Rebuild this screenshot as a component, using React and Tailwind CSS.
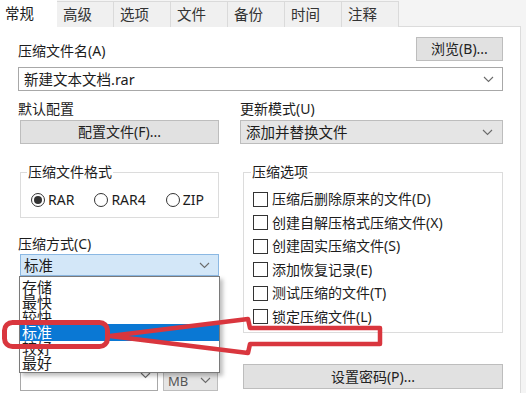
import React from "react";

const tabs = ["常规", "高级", "选项", "文件", "备份", "时间", "注释"];

const options = [
  "压缩后删除原来的文件(D)",
  "创建自解压格式压缩文件(X)",
  "创建固实压缩文件(S)",
  "添加恢复记录(E)",
  "测试压缩的文件(T)",
  "锁定压缩文件(L)",
];

const Chevron = ({ className = "" }) => (
  <svg width="11" height="7" viewBox="0 0 11 7" className={className}>
    <polyline points="1,1 5.5,5.5 10,1" fill="none" stroke="#6b6b6b" strokeWidth="1.1" />
  </svg>
);

const Radio = ({ checked, label }) => (
  <div className="flex items-center gap-[3px]">
    <span className="w-[14px] h-[14px] rounded-full border border-[#333] flex items-center justify-center">
      {checked && <span className="w-[8px] h-[8px] rounded-full bg-[#333]" />}
    </span>
    <span className="text-[14px] leading-[16px]">{label}</span>
  </div>
);

const App = () => {
  return (
    <div
      className="relative w-[526px] h-[393px] overflow-hidden bg-[#f4f4f4] text-[#1c1c1c]"
      style={{ fontFamily: '"Noto Sans", "Noto Sans CJK SC", sans-serif' }}
    >
      {/* Tabs */}
      <div className="flex h-[26px]">
        {tabs.map((t, i) => (
          <div
            key={t}
            className={
              i === 0
                ? "w-[57px] h-[27px] bg-white pl-[5px] pt-[4px] text-[14.5px] leading-[18px] relative z-10"
                : "w-[57px] h-[26px] mt-[1px] bg-[#f0f0f0] border-r border-t border-[#dadada] pl-[6px] pt-[3px] text-[14.5px] leading-[18px] text-[#333]"
            }
          >
            {t}
          </div>
        ))}
      </div>

      {/* Panel */}
      <div className="w-[521px] h-[367px] bg-white border-r border-t border-[#dcdcdc] pl-[18px] pr-[17px]">
        <div className="flex items-end justify-between pt-[10px]">
          <span className="text-[14px] leading-[18px] mb-[1px]">压缩文件名(A)</span>
          <button className="w-[87px] h-[24px] bg-[#e1e1e1] border border-[#bdbdbd] text-[14px] leading-[18px] text-[#222]">
            浏览(B)...
          </button>
        </div>
        <div className="mt-[6px] h-[24px] border border-[#a8a8a8] flex items-center justify-between pl-[5px] pr-[8px]">
          <span className="text-[14.5px] leading-[18px]">新建文本文档.rar</span>
          <Chevron />
        </div>

        <div className="flex gap-[21px] mt-[9px]">
          {/* Left column */}
          <div className="w-[201px] flex flex-col">
            <span className="text-[14px] leading-[18px]">默认配置</span>
            <button className="mt-[2px] ml-[2px] h-[24px] bg-[#e1e1e1] border border-[#bdbdbd] text-[14px] leading-[18px] text-[#222]">
              配置文件(F)...
            </button>
            <div className="relative mt-[28px] ml-[2px] h-[46px] border border-[#dcdcdc]">
              <span className="absolute left-[6px] -top-[10px] bg-white px-[1px] text-[14px] leading-[18px]">
                压缩文件格式
              </span>
              <div className="flex gap-[20px] pl-[10px] pt-[19px]">
                <Radio checked label="RAR" />
                <Radio label="RAR4" />
                <Radio label="ZIP" />
              </div>
            </div>
            <span className="mt-[17px] text-[14px] leading-[18px]">压缩方式(C)</span>
            <div className="mt-[1px] ml-[2px] h-[22px] bg-[#d3e7f8] border border-[#8bb8e3] flex items-center justify-between pl-[3px] pr-[8px]">
              <span className="text-[14.5px] leading-[18px]">标准</span>
              <Chevron />
            </div>
            <div className="flex gap-[5px] mt-[94px] ml-[2px]">
              <div className="w-[138px] h-[21px] border border-[#a8a8a8] flex items-start justify-end pr-[6px] pt-[1px]">
                <Chevron />
              </div>
              <div className="w-[55px] h-[21px] bg-[#e5e5e5] border border-[#bdbdbd] flex items-center justify-between pl-[4px] pr-[6px]">
                <span className="text-[13px] leading-[16px] text-[#555]">MB</span>
                <Chevron />
              </div>
            </div>
          </div>

          {/* Right column */}
          <div className="w-[263px] flex flex-col">
            <span className="text-[14px] leading-[18px]">更新模式(U)</span>
            <div className="mt-[2px] h-[24px] bg-[#e5e5e5] border border-[#bdbdbd] flex items-center justify-between pl-[5px] pr-[9px]">
              <span className="text-[14.5px] leading-[18px]">添加并替换文件</span>
              <Chevron />
            </div>
            <div className="relative mt-[28px] ml-[3px] h-[161px] border border-[#dcdcdc]">
              <span className="absolute left-[7px] -top-[10px] bg-white px-[1px] text-[14px] leading-[18px]">
                压缩选项
              </span>
              <div className="flex flex-col gap-[7.5px] pl-[9px] pt-[18px]">
                {options.map((o) => (
                  <div key={o} className="flex items-center gap-[4px] h-[16px]">
                    <span className="w-[15px] h-[15px] border border-[#333]" />
                    <span className="text-[14px] leading-[16px]">{o}</span>
                  </div>
                ))}
              </div>
            </div>
            <button className="mt-[31px] ml-[3px] h-[25px] bg-[#e1e1e1] border border-[#bdbdbd] text-[14px] leading-[18px] text-[#222]">
              设置密码(P)...
            </button>
          </div>
        </div>
      </div>

      {/* Dropdown list */}
      <div className="absolute left-[19px] top-[276px] w-[201px] h-[97px] bg-white border border-[#7a7a7a] shadow-[3px_3px_4px_rgba(0,0,0,0.25)] overflow-hidden pt-[3px] text-[15px] leading-[15px]">
        <div className="h-[15px] pl-[2px]">存储</div>
        <div className="h-[15px] pl-[2px]">最快</div>
        <div className="h-[14px] pl-[2px] overflow-hidden">较快</div>
        <div className="h-[17px] pl-[2px] pt-[1px] bg-[#0a78d4] text-white">标准</div>
        <div className="h-[15px] pl-[2px]">较好</div>
        <div className="h-[15px] pl-[2px]">最好</div>
      </div>

      {/* Red annotation */}
      <svg className="absolute left-0 top-0 pointer-events-none" width="526" height="393">
        <rect x="4.5" y="322.5" width="103" height="24" rx="8" fill="none" stroke="#d9363e" strokeWidth="5" />
        <polygon
          points="110,336 248,319 250,328 380,328 380,344 250,344 248,353"
          fill="none"
          stroke="#d9363e"
          strokeWidth="4.5"
          strokeLinejoin="round"
        />
      </svg>
    </div>
  );
};

export default App;
